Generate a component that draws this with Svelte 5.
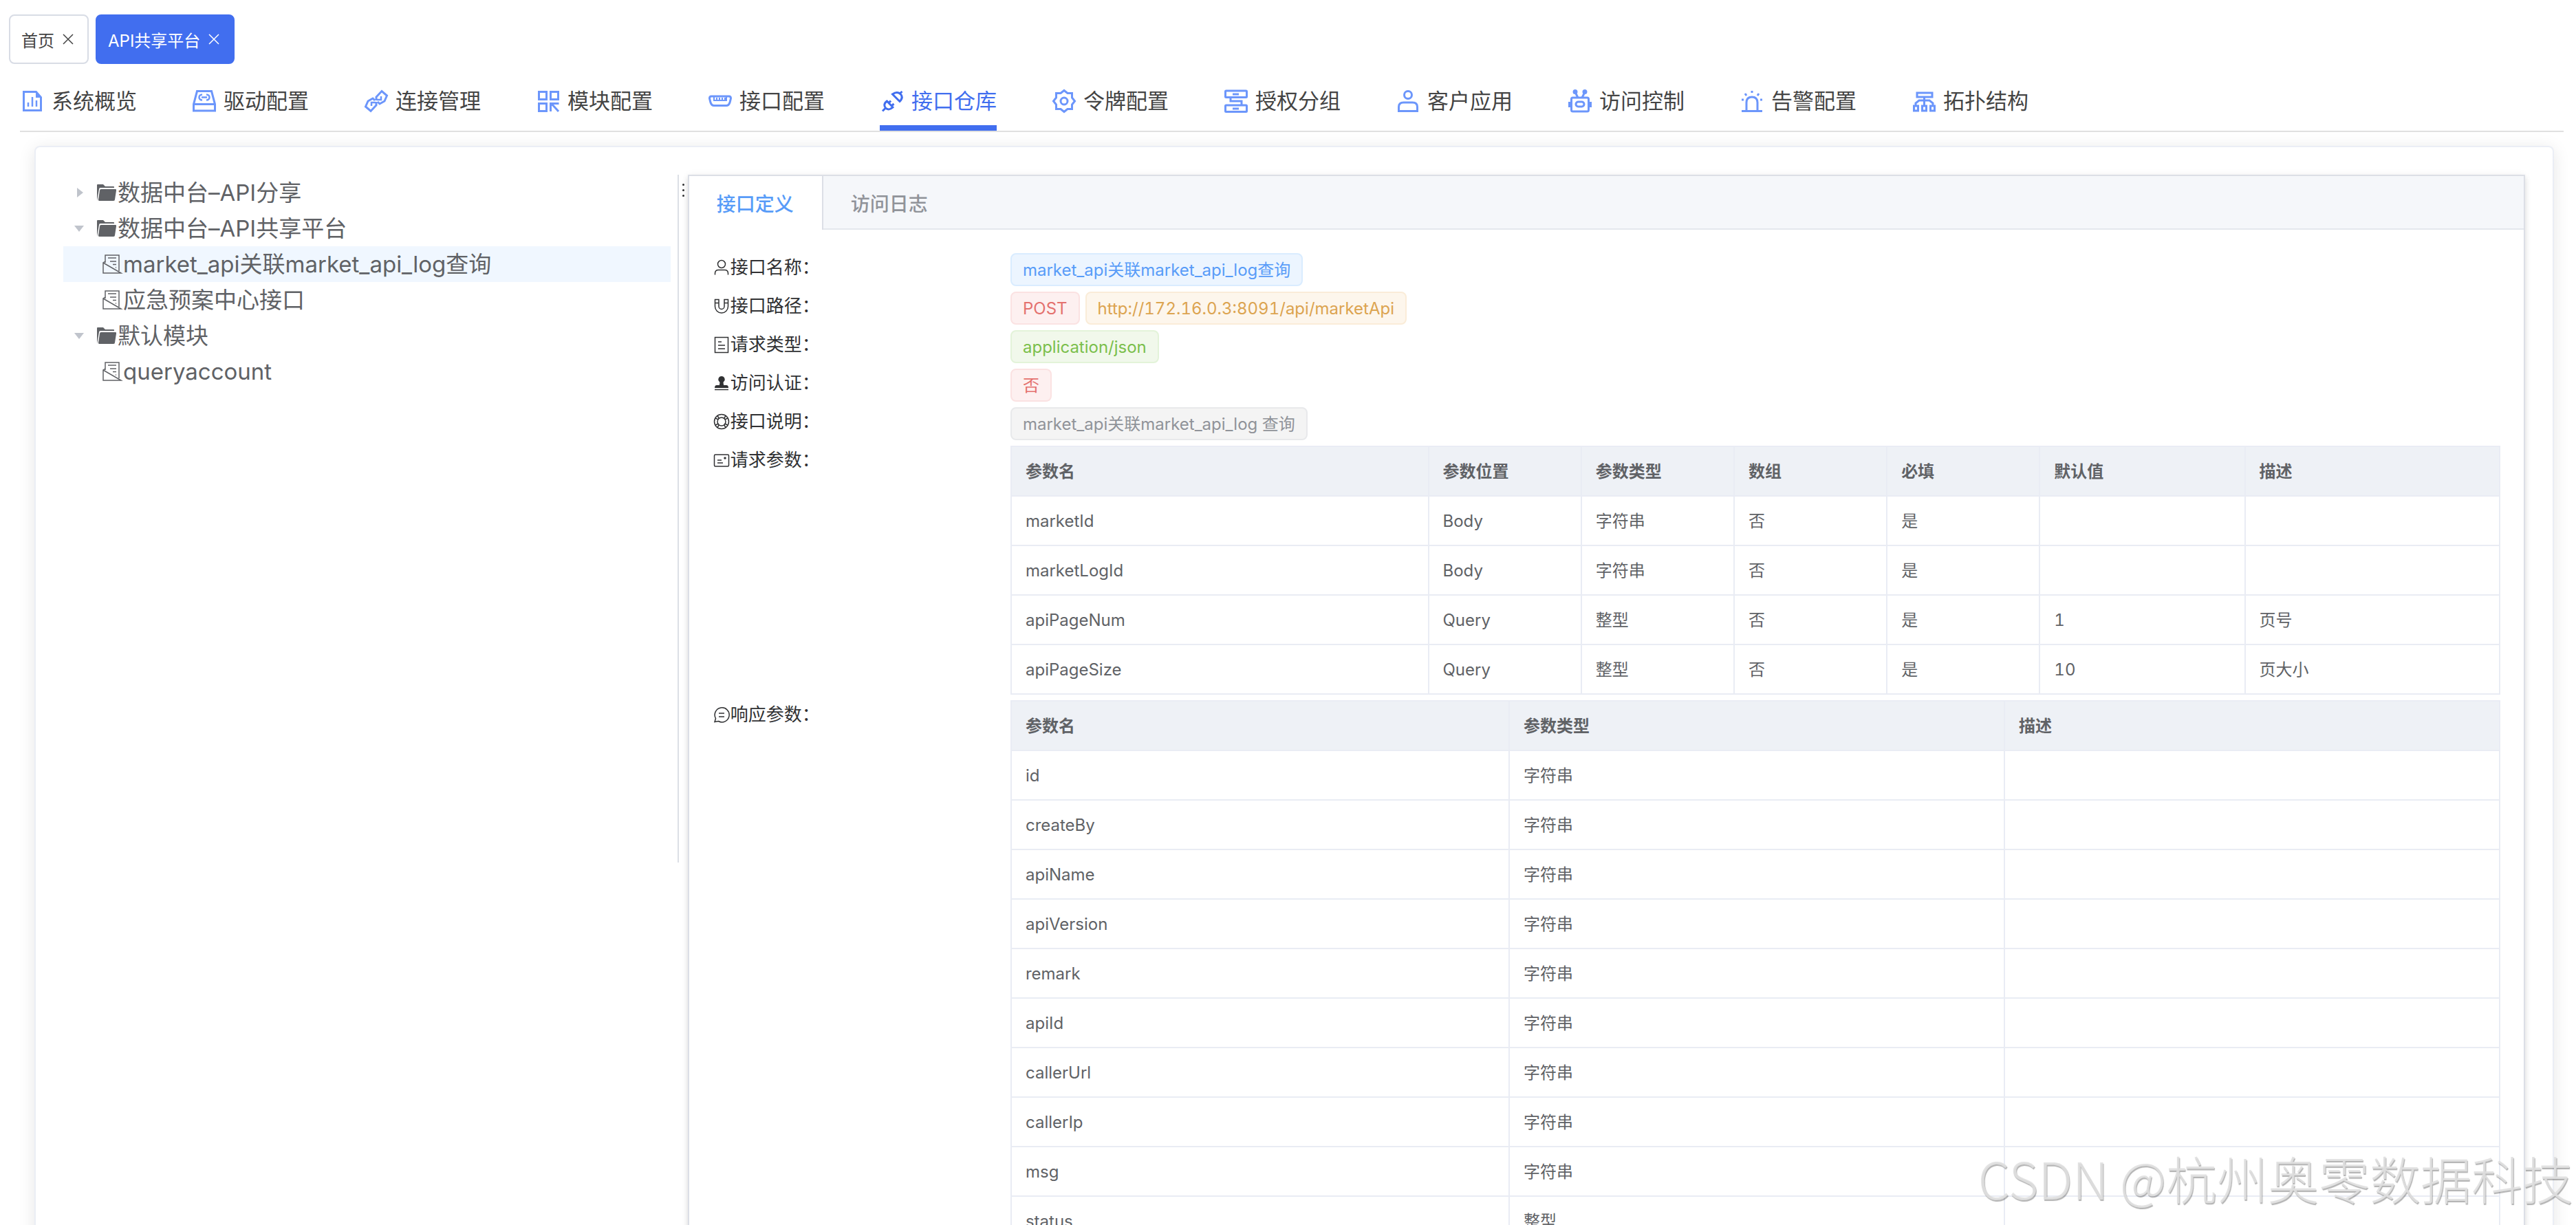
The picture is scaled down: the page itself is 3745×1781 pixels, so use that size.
<script lang="ts">
	type Cell = string;

	const pages = [{ title: '首页' }, { title: 'API共享平台' }];

	const menus = [
		{ icon: 'overview', title: '系统概览' },
		{ icon: 'driver', title: '驱动配置' },
		{ icon: 'link', title: '连接管理' },
		{ icon: 'module', title: '模块配置' },
		{ icon: 'port', title: '接口配置' },
		{ icon: 'plug', title: '接口仓库' },
		{ icon: 'gear', title: '令牌配置' },
		{ icon: 'group', title: '授权分组' },
		{ icon: 'client', title: '客户应用' },
		{ icon: 'robot', title: '访问控制' },
		{ icon: 'alarm', title: '告警配置' },
		{ icon: 'topology', title: '拓扑结构' }
	];

	const tree = $state([
		{ label: '数据中台–API分享', open: false, children: [] as string[] },
		{
			label: '数据中台–API共享平台',
			open: true,
			children: ['market_api关联market_api_log查询', '应急预案中心接口']
		},
		{ label: '默认模块', open: true, children: ['queryaccount'] }
	]);

	const tabs = ['接口定义', '访问日志'];

	const details = [
		{
			icon: 'user',
			label: '接口名称：',
			tags: [{ type: 'primary', text: 'market_api关联market_api_log查询' }]
		},
		{
			icon: 'magnet',
			label: '接口路径：',
			tags: [
				{ type: 'danger', text: 'POST' },
				{ type: 'warning', text: 'http://172.16.0.3:8091/api/marketApi' }
			]
		},
		{ icon: 'document', label: '请求类型：', tags: [{ type: 'success', text: 'application/json' }] },
		{ icon: 'stamp', label: '访问认证：', tags: [{ type: 'danger', text: '否' }] },
		{
			icon: 'help',
			label: '接口说明：',
			tags: [{ type: 'info', text: 'market_api关联market_api_log 查询' }]
		}
	];

	const request = {
		columns: [
			{ title: '参数名', width: 606 },
			{ title: '参数位置', width: 222 },
			{ title: '参数类型', width: 222 },
			{ title: '数组', width: 222 },
			{ title: '必填', width: 222 },
			{ title: '默认值', width: 298 },
			{ title: '描述', width: 370 }
		],
		rows: [
			['marketId', 'Body', '字符串', '否', '是', '', ''],
			['marketLogId', 'Body', '字符串', '否', '是', '', ''],
			['apiPageNum', 'Query', '整型', '否', '是', '1', '页号'],
			['apiPageSize', 'Query', '整型', '否', '是', '10', '页大小']
		] as Cell[][]
	};

	const response = {
		columns: [
			{ title: '参数名', width: 723 },
			{ title: '参数类型', width: 719 },
			{ title: '描述', width: 719 }
		],
		rows: [
			['id', '字符串', ''],
			['createBy', '字符串', ''],
			['apiName', '字符串', ''],
			['apiVersion', '字符串', ''],
			['remark', '字符串', ''],
			['apiId', '字符串', ''],
			['callerUrl', '字符串', ''],
			['callerIp', '字符串', ''],
			['msg', '字符串', ''],
			['status', '整型', '']
		] as Cell[][]
	};

	// 36x36 menu icons
	const menuIcons: Record<string, string> = {
		overview:
			'<path d="M5.500 4.500h18l7 8v19h-25z"/><path d="M23 4l8 9h-8z" fill="currentColor" stroke="none"/><path d="M12 20v6M18 12v14M24 17v9" stroke-width="2.500"/>',
		driver:
			'<path d="M7.500 3.500h21l5 19v9.500h-31v-9.500zM2.500 22.500h31"/><path d="M15 8.500c-6 0-6 8 0 8M21 8.500c6 0 6 8 0 8M14 12.500h8" stroke-width="2.500"/>',
		link:
			'<path d="M18 17v-5l8-8.500 7.500 6.500-3.500 8-7 4-3-3M18 19v5l-8 8.500-7.500-6.500 3.500-8 7-4 3 3"/><path d="M25 11v5h-6M11 25v-5h6" stroke-width="2.500"/>',
		module:
			'<path d="M4.500 4.500h11v11h-11zM21.500 4.500h11v11h-11zM4.500 21.500h11v11h-11zM21.500 33v-11.500h12M23 22l10 11"/>',
		port: '<path d="M5 11h26q2.500 0 2.500 3l-1.500 6q-1.500 4.500-5 4.500h-18q-3.500 0-5-4.500l-1.500-6q0-3 2.500-3z"/><path d="M9 12v5h18v-5M13 13v3M17 13v3M21 13v3M25 13v3" stroke-width="2"/>',
		plug: '<path d="M4 32.500l4.500-4.500M9.500 17l10.500 11M10.500 18c-4.500 3-4.500 7-2 10 3 3 7 2.500 10.500-1.500M13 21l3-3.500M17 25l3.500-3M32.500 4l-4.500 4M18.500 8l10.500 10.500c4-4 4-8 1-11-3-2.500-7.500-2.500-11.500.5z"/>',
		gear: '<path d="M18 2.500l5 4h6.500v6.500l4 5-4 5v6.500h-6.500l-5 4-5-4h-6.500v-6.500l-4-5 4-5v-6.500h6.500z"/><circle cx="18" cy="18" r="5"/>',
		group:
			'<rect x="2.500" y="3" width="31" height="9.500" rx="1"/><rect x="2.500" y="24" width="31" height="9.500" rx="1"/><path d="M13 8h9M13 29h9M10 12.500v5.500h16v6"/>',
		client: '<circle cx="18" cy="9" r="5.500"/><path d="M4.500 32.500v-6q0-6.500 7-6.500h13q7 0 7 6.500v6z"/>',
		robot:
			'<rect x="5.500" y="13" width="25" height="20" rx="2"/><rect x="12" y="19" width="12" height="7" rx="3.500"/><path d="M2.500 19v8M33.500 19v8M11 5l4 8M25 5l-4 8"/><circle cx="11" cy="4.500" r="2" fill="currentColor"/><circle cx="25" cy="4.500" r="2" fill="currentColor"/>',
		alarm:
			'<path d="M3 32.500h30M10 32v-12q0-8 8-8t8 8v12M18 3v3M8 7l2 3M28 7l-2 3M3 16h3M30 16h3"/>',
		topology:
			'<rect x="8" y="6" width="22" height="6"/><path d="M18.500 12v12M6 24v-3l5-4h15l5 4v3"/><path d="M3.500 25h6v7h-6zM15.500 25h6v7h-6zM27.500 25h6v7h-6z"/>'
	};

	// 26x26 label icons
	const labelIcons: Record<string, string> = {
		user: '<circle cx="13" cy="8" r="5.500"/><path d="M3.500 23.500v-2q0-5 5-5h9q5 0 5 5v2"/>',
		magnet: '<path d="M3.500 3.500h5.500v10a4 4 0 0 0 8 0v-10h5.500v10a9.500 9.500 0 0 1-19 0zM3.500 8.500h5.500M17 8.500h5.500"/>',
		document: '<path d="M3.500 2.500h19v22h-19zM8 9h5M8 14h10M8 19h10"/>',
		stamp:
			'<path d="M13 3a4.500 4.500 0 0 0-3 8q1 1 0 4v1H6q-3 0-3 4h20q0-4-3-4h-4v-1q-1-3 0-4a4.500 4.500 0 0 0-3-8z" fill="currentColor" stroke="none"/><path d="M3 22.500h20"/>',
		help: '<circle cx="13" cy="13" r="10.500"/><circle cx="13" cy="13" r="6"/><path d="M7 4.500l2.500 4M4 8l4.500 2M19 4.500l-2.500 4M22 8l-4.500 2M7 21.500l2.500-4M4 18l4.500-2M19 21.500l-2.500-4M22 18l-4.500-2"/>',
		postcard:
			'<rect x="2.500" y="5" width="21" height="17" rx="1.500"/><path d="M7 13h6M7 17h8"/><circle cx="18" cy="10" r="1" fill="currentColor"/>',
		chat: '<path d="M3 23.500l1.500-5a10.500 10.500 0 1 1 4 4zM9 11h8M9 16h8"/>'
	};

	let activePage = $state(1);
	let activeMenu = $state('plug');
	let activeTab = $state(0);
	let current = $state('market_api关联market_api_log查询');
</script>

{#snippet dataTable(table: { columns: { title: string; width: number }[]; rows: Cell[][] })}
	<table>
		<colgroup>
			{#each table.columns as col}
				<col style="width: {col.width}px" />
			{/each}
		</colgroup>
		<thead>
			<tr>
				{#each table.columns as col}
					<th>{col.title}</th>
				{/each}
			</tr>
		</thead>
		<tbody>
			{#each table.rows as row}
				<tr>
					{#each row as cell}
						<td>{cell}</td>
					{/each}
				</tr>
			{/each}
		</tbody>
	</table>
{/snippet}

{#snippet label(icon: string, text: string)}
	<dt>
		<svg class="label-icon" viewBox="0 0 26 26">{@html labelIcons[icon]}</svg>{text}
	</dt>
{/snippet}

<div class="app">
	<div class="pages">
		{#each pages as page, i}
			<div class="page" class:active={activePage === i}>
				<button class="page-title" onclick={() => (activePage = i)}>{page.title}</button>
				<button class="close" aria-label="关闭">
					<svg viewBox="0 0 16 16"><path d="M1 1l14 14M15 1L1 15" /></svg>
				</button>
			</div>
		{/each}
	</div>

	<nav>
		{#each menus as menu}
			<button class="menu" class:active={activeMenu === menu.icon} onclick={() => (activeMenu = menu.icon)}>
				<svg viewBox="0 0 36 36">{@html menuIcons[menu.icon]}</svg>
				{menu.title}
			</button>
		{/each}
	</nav>

	<main class="card">
		<aside>
			<ul class="tree">
				{#each tree as node}
					<li>
						<button class="node" onclick={() => (node.open = !node.open)}>
							<svg class="caret" viewBox="0 0 20 20">
								{#if node.open}
									<path d="M3 6h14l-7 9z" />
								{:else}
									<path d="M7 3v14l9-7z" />
								{/if}
							</svg>
							<svg class="folder" viewBox="0 0 32 32">
								<path d="M2 28V5q0-1 1-1h8l3 3h12q1 0 1 1v1H7q-2 0-2 2z" />
								<path d="M8 11h21q1.500 0 1 2l-2 13q0 2-2 2H5q-1 0-1-2l2-13q0-2 2-2z" />
							</svg>
							{node.label}
						</button>
						{#if node.open}
							<ul>
								{#each node.children as child}
									<li>
										<button class="node leaf" class:current={current === child} onclick={() => (current = child)}>
											<svg class="file" viewBox="0 0 32 32">
												<path d="M6 14V3h20v23M6 12l-3 2v15h26L3 14M10 7h12M13 12h9M17 16.500h5M21 21h1" />
											</svg>
											{child}
										</button>
									</li>
								{/each}
							</ul>
						{/if}
					</li>
				{/each}
			</ul>
		</aside>
		<div class="splitter"><i></i><i></i><i></i></div>

		<section class="panel">
			<div class="tabs" role="tablist">
				{#each tabs as tab, i}
					<button role="tab" aria-selected={activeTab === i} class:active={activeTab === i} onclick={() => (activeTab = i)}>
						{tab}
					</button>
				{/each}
			</div>
			<dl>
				{#each details as item}
					{@render label(item.icon, item.label)}
					<dd>
						{#each item.tags as tag}
							<span class="tag {tag.type}">{tag.text}</span>
						{/each}
					</dd>
				{/each}
				{@render label('postcard', '请求参数：')}
				<dd>{@render dataTable(request)}</dd>
				{@render label('chat', '响应参数：')}
				<dd>{@render dataTable(response)}</dd>
			</dl>
		</section>
	</main>

	<div class="watermark">CSDN @杭州奥零数据科技</div>
</div>

<style>
	:global(body) {
		background: #fff;
	}
	.app {
		height: 100vh;
		overflow: hidden;
		box-sizing: border-box;
		padding-top: 21px;
		font-family: Inter, 'Noto Sans CJK SC', sans-serif;
		font-variant-numeric: tabular-nums;
		color: #303133;
	}
	button {
		border: 0;
		padding: 0;
		margin: 0;
		background: none;
		font: inherit;
		color: inherit;
		cursor: pointer;
	}
	ul,
	dl,
	dd {
		margin: 0;
		padding: 0;
		list-style: none;
	}
	svg {
		flex: none;
		fill: none;
		stroke: currentColor;
	}

	.pages {
		display: flex;
		gap: 10px;
		padding: 0 13px;
	}
	.page {
		display: flex;
		align-items: center;
		gap: 12px;
		height: 68px;
		padding: 0 20px 0 16px;
		border: 2px solid #d8dce5;
		border-radius: 8px;
		font-size: 24px;
		color: #444;
	}
	.page.active {
		background: #416eef;
		border-color: #416eef;
		color: #fff;
	}
	.page-title {
		padding-top: 5px;
		line-height: 32px;
	}
	.close svg {
		display: block;
		width: 16px;
		height: 16px;
		stroke-width: 1.5;
	}

	nav {
		display: flex;
		gap: 80px;
		margin: 19px 18px 0 29px;
		border-bottom: 2px solid #e0e0e0;
	}
	.menu {
		display: flex;
		align-items: center;
		gap: 10px;
		width: 170px;
		height: 78px;
		border-bottom: 8px solid transparent;
		font-size: 31px;
		line-height: 40px;
		color: #444;
		white-space: nowrap;
	}
	.menu svg {
		width: 36px;
		height: 36px;
		stroke-width: 3;
		color: #6c96fb;
	}
	.menu.active,
	.menu.active svg {
		color: #416eef;
	}
	.menu.active {
		border-color: #416eef;
	}

	.card {
		display: flex;
		align-items: flex-start;
		margin: 20px 32px 0 50px;
		padding: 40px;
		border: 2px solid #ebeef5;
		border-radius: 8px;
		background: #fff;
		box-shadow: 0 4px 24px rgba(0, 0, 0, 0.1);
	}
	aside {
		flex: none;
		box-sizing: border-box;
		width: 25%;
		height: 1000px;
		padding-right: 10px;
		border-right: 2px solid #dcdfe6;
	}
	.node {
		display: flex;
		align-items: center;
		width: 100%;
		height: 52px;
		padding-left: 13px;
		font-size: 33px;
		line-height: 40px;
		color: #606266;
		white-space: nowrap;
	}
	.node.leaf {
		padding-left: 55px;
	}
	.node.current {
		background: #f0f7ff;
	}
	.caret {
		width: 20px;
		height: 20px;
		margin-right: 14px;
		fill: #c0c4cc;
		stroke: none;
	}
	.folder {
		width: 32px;
		height: 32px;
		fill: currentColor;
		stroke: none;
	}
	.file {
		width: 32px;
		height: 32px;
		stroke-width: 1.5;
	}
	.splitter {
		display: flex;
		flex: none;
		flex-direction: column;
		align-items: center;
		gap: 5px;
		width: 13px;
		padding-top: 13px;
	}
	.splitter i {
		width: 3px;
		height: 3px;
		border-radius: 50%;
		background: #303133;
	}

	.panel {
		flex: 1;
		min-width: 0;
		border: 2px solid #dcdfe6;
		box-shadow:
			0 4px 8px rgba(0, 0, 0, 0.12),
			0 0 12px rgba(0, 0, 0, 0.04);
	}
	.tabs {
		display: flex;
		background: #f5f7fa;
		border-bottom: 2px solid #e4e7ed;
	}
	.tabs button {
		height: 78px;
		margin-bottom: -2px;
		padding: 3px 41px 0 40px;
		border-right: 2px solid transparent;
		font-size: 28px;
		font-weight: 500;
		line-height: 40px;
		color: #909399;
	}
	.tabs button.active {
		background: #fff;
		border-color: #dcdfe6;
		color: #589cf8;
	}
	dl {
		display: grid;
		grid-template-columns: 1fr 5fr;
		row-gap: 8px;
		padding: 34px;
	}
	dt {
		display: flex;
		align-items: center;
		height: 42px;
		font-size: 26px;
		line-height: 32px;
	}
	.label-icon {
		width: 26px;
		height: 26px;
		stroke-width: 1.5;
	}
	dd {
		display: flex;
		gap: 8px;
		min-width: 0;
	}
	.tag {
		height: 44px;
		padding: 0 16px;
		border: 2px solid;
		border-radius: 8px;
		font-size: 24px;
		line-height: 46px;
		white-space: nowrap;
	}
	.primary {
		background: #ecf5ff;
		border-color: #d9ecff;
		color: #589cf8;
	}
	.danger {
		background: #fdf0f0;
		border-color: #fbe2e2;
		color: #e4716e;
	}
	.warning {
		background: #fdf6ec;
		border-color: #faecd8;
		color: #dca450;
	}
	.success {
		background: #f1f8eb;
		border-color: #e3f3d9;
		color: #7bbf4b;
	}
	.info {
		background: #f4f4f4;
		border-color: #e8e9eb;
		color: #909399;
	}

	table {
		width: 100%;
		table-layout: fixed;
		border-collapse: separate;
		border-spacing: 0;
		border-top: 2px solid #e9ecf4;
		border-left: 2px solid #e9ecf4;
		font-size: 24px;
		color: #606266;
	}
	th,
	td {
		box-sizing: border-box;
		height: 72px;
		padding: 2px 20px 0;
		border-right: 2px solid #e9ecf4;
		border-bottom: 2px solid #e9ecf4;
		text-align: left;
		line-height: 32px;
	}
	th {
		background: #eef1f6;
		font-weight: 700;
	}

	.watermark {
		position: fixed;
		right: 4px;
		bottom: 15px;
		font-family: 'Noto Sans CJK SC', sans-serif;
		font-size: 74px;
		font-weight: 300;
		line-height: 108px;
		color: rgba(224, 224, 224, 0.9);
		text-shadow: 1px 2px 1px rgba(0, 0, 0, 0.3);
		white-space: nowrap;
		pointer-events: none;
	}
</style>
